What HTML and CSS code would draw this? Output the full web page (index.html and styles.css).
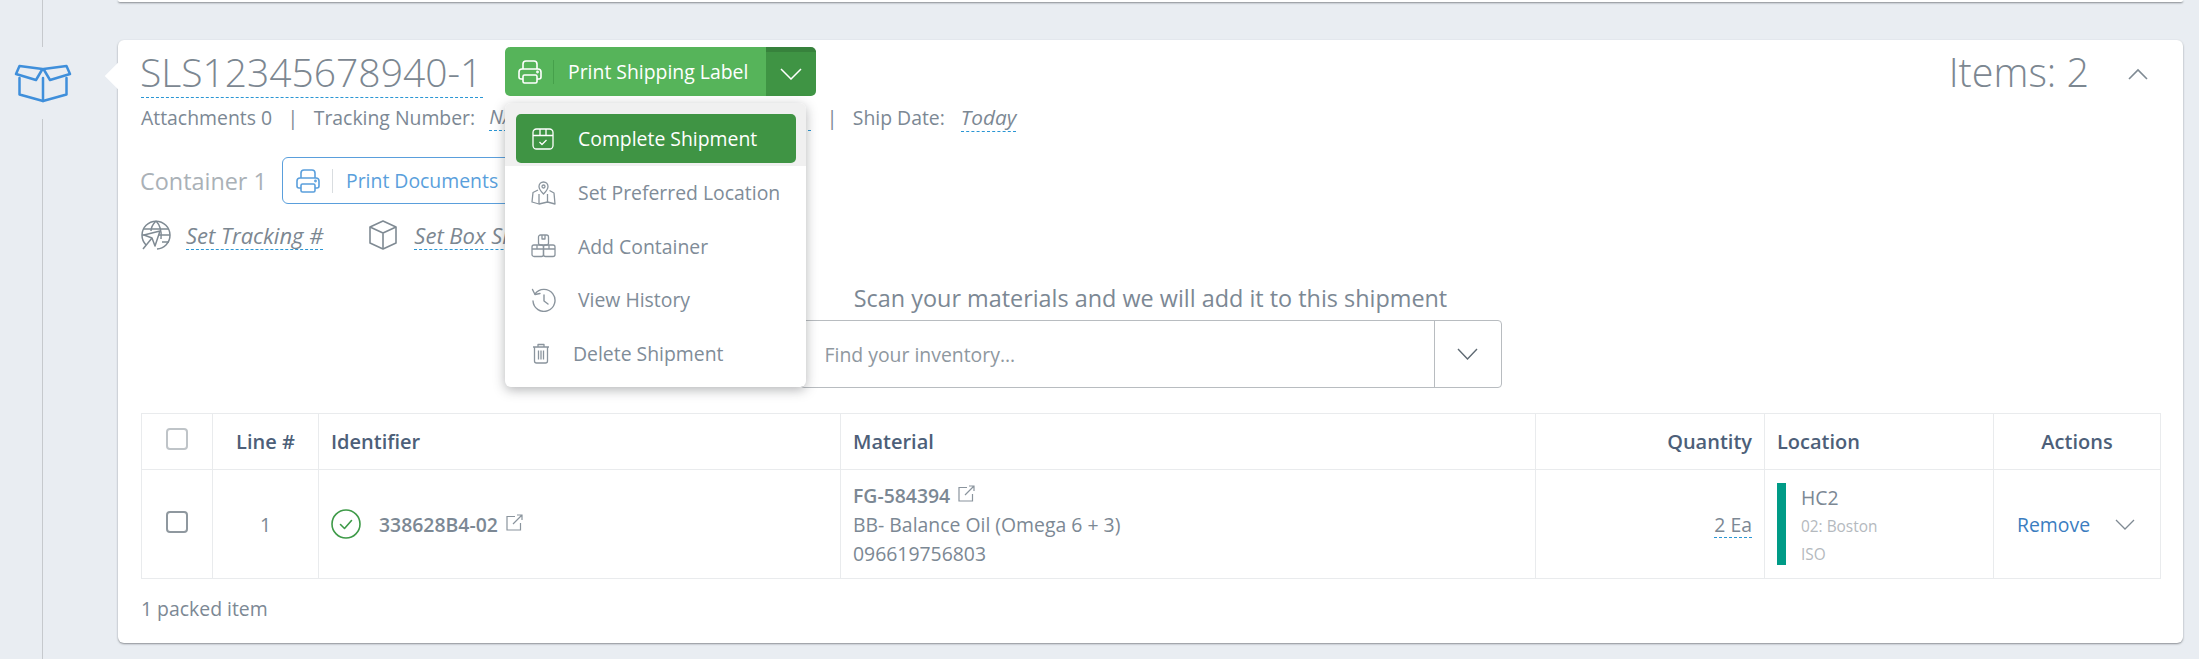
FILE: index.html
```html
<!DOCTYPE html>
<html lang="en">
<head>
<meta charset="utf-8">
<title>Shipment</title>
<link rel="stylesheet" href="styles.css">
</head>
<body>
<div class="page">
  <aside class="rail">
    <div class="rail-line rail-line-top"></div>
    <div class="rail-icon">
      <svg width="58" height="40" viewBox="0 0 58 40" fill="none" stroke="#3f8fdb" stroke-width="2.500" stroke-linejoin="round" stroke-linecap="round"><path d="M5.500 15v16.500L29 38l23.500-6.500V15"/><path d="M29 38V15"/><path d="M2 11l3.500-8L28.500 6 22 17z"/><path d="M56 11l-3.500-8L29.500 6 36 17z"/></svg>
    </div>
    <div class="rail-line rail-line-rest"></div>
  </aside>
  <main class="main">
    <div class="prev-card"></div>
    <section class="card">
      <span class="card-arrow"></span>
      <div class="title-row">
        <h1 class="title">SLS12345678940-1</h1>
        <div class="split">
          <button class="split-main">
            <svg class="btn-icon" width="26" height="26" viewBox="0 0 26 26" fill="none" stroke="#fff" stroke-width="1.600" stroke-linejoin="round"><path d="M6 10V5a3 3 0 0 1 3-3h8a3 3 0 0 1 3 3v5"/><path d="M6 20H4a2 2 0 0 1-2-2v-5a3 3 0 0 1 3-3h16a3 3 0 0 1 3 3v5a2 2 0 0 1-2 2h-2"/><rect x="6" y="16" width="14" height="8" rx="1.500"/><circle cx="20.500" cy="13" r=".6"/></svg>
            <span class="btn-sep"></span>
            <span>Print Shipping Label</span>
          </button>
          <button class="split-caret">
            <svg width="22" height="12" viewBox="0 0 22 12" fill="none" stroke="#fff" stroke-width="1.500"><path d="M1 1l10 10L21 1"/></svg>
          </button>
          <div class="menu">
            <div class="menu-active">
              <div class="menu-btn">
                <svg class="menu-icon" width="22" height="22" viewBox="0 0 22 22" fill="none" stroke="#fff" stroke-width="1.300" stroke-linejoin="round"><rect x="1" y="1" width="20" height="20" rx="3.500"/><path d="M1 7.500h20M8 1v6.500M14 1v6.500"/><path d="M7.500 14l2.500 2.500 4.500-4.500"/></svg>
                <span>Complete Shipment</span>
              </div>
            </div>
            <div class="menu-item">
              <svg class="menu-icon" width="25" height="24" viewBox="0 0 25 24" fill="none" stroke="#8a949d" stroke-width="1.300" stroke-linejoin="round"><path d="M12.500 13S8 8.500 8 5.500a4.500 4.500 0 0 1 9 0C17 8.500 12.500 13 12.500 13z"/><circle cx="12.500" cy="5.500" r="1.500"/><path d="M7 9l-5 2.500L1 21l7 2 8.500-2 7.500 2-1-11-4.500-2.500"/><path d="M8 13v10M16.500 13v8"/></svg>
              <span>Set Preferred Location</span>
            </div>
            <div class="menu-item">
              <svg class="menu-icon" width="25" height="24" viewBox="0 0 25 24" fill="none" stroke="#8a949d" stroke-width="1.300" stroke-linejoin="round"><rect x="7.500" y="1" width="10" height="10" rx="2"/><path d="M11 1v4h3V1"/><rect x="1" y="11" width="11.500" height="11.500" rx="2"/><rect x="12.500" y="11" width="11.500" height="11.500" rx="2"/><path d="M1 15h11.500M12.500 15H24M6 11v4M18 11v4"/></svg>
              <span>Add Container</span>
            </div>
            <div class="menu-item">
              <svg class="menu-icon" width="25" height="24" viewBox="0 0 25 24" fill="none" stroke="#8a949d" stroke-width="1.400" stroke-linecap="round" stroke-linejoin="round"><path d="M4 6a11 11 0 1 1-2 7"/><path d="M1.500 1.500L4 6.500l5-1"/><path d="M13 7v6l4 3"/></svg>
              <span>View History</span>
            </div>
            <div class="menu-item menu-item-delete">
              <svg class="menu-icon" width="18" height="21" viewBox="0 0 18 21" fill="none" stroke="#8a949d" stroke-width="1.300" stroke-linejoin="round"><path d="M1 4h16M6 4V1.500h6V4"/><path d="M2.500 4v14a2 2 0 0 0 2 2h9a2 2 0 0 0 2-2V4"/><path d="M6.500 7.500v9M9 7.500v9M11.500 7.500v9"/></svg>
              <span>Delete Shipment</span>
            </div>
          </div>
        </div>
        <div class="items">Items: 2</div>
        <svg class="collapse" width="20" height="12" viewBox="0 0 20 12" fill="none" stroke="#7f8a93" stroke-width="1.600"><path d="M1 11l9-9 9 9"/></svg>
      </div>

      <div class="meta">
        <span>Attachments 0</span>
        <span class="pipe">|</span>
        <span>Tracking Number:</span>
        <span class="editable tracking-value">N/A</span>
        <span class="pipe">|</span>
        <span>Ship Date:</span>
        <span class="editable ship-date">Today</span>
      </div>

      <div class="container-row">
        <span class="container-label">Container 1</span>
        <button class="outline-btn">
          <svg width="26" height="26" viewBox="0 0 26 26" fill="none" stroke="#5a9fdc" stroke-width="1.600" stroke-linejoin="round"><path d="M6 10V5a3 3 0 0 1 3-3h8a3 3 0 0 1 3 3v5"/><path d="M6 20H4a2 2 0 0 1-2-2v-5a3 3 0 0 1 3-3h16a3 3 0 0 1 3 3v5a2 2 0 0 1-2 2h-2"/><rect x="6" y="16" width="14" height="8" rx="1.500"/><circle cx="20.500" cy="13" r=".6"/></svg>
          <span class="outline-sep"></span>
          <span>Print Documents</span>
        </button>
      </div>

      <div class="set-row">
        <svg width="30" height="30" viewBox="0 0 30 30" fill="none" stroke="#7f8a93" stroke-width="1.500" stroke-linejoin="round"><path d="M5 25A14 14 0 1 1 25 25A14 14 0 0 1 16 29"/><path d="M2 9h26M1 15h28M15 1c-4 4-5 8-5 10M15 1c4 4 6 9 5 18M21 22h7"/><path d="M3 15l16-4-5 15-3-8z" fill="#fff"/><path d="M2 29l9-11"/></svg>
        <span class="editable set-tracking">Set Tracking #</span>
        <svg class="box-icon" width="30" height="30" viewBox="0 0 30 30" fill="none" stroke="#7f8a93" stroke-width="1.600" stroke-linejoin="round"><path d="M15 1l13 6v16l-13 6-13-6V7z"/><path d="M2 7l13 6 13-6M15 13v16"/></svg>
        <span class="editable set-box">Set Box Size</span>
      </div>

      <div class="scan">
        <div class="scan-title">Scan your materials and we will add it to this shipment</div>
        <div class="scan-field">
          <div class="scan-input">Find your inventory...</div>
          <div class="scan-caret">
            <svg width="21" height="12" viewBox="0 0 21 12" fill="none" stroke="#5f6a73" stroke-width="1.400"><path d="M1 1l9.500 10L20 1"/></svg>
          </div>
        </div>
      </div>

      <table class="grid">
        <colgroup>
          <col class="c-check"><col class="c-line"><col class="c-id"><col class="c-mat"><col class="c-qty"><col class="c-loc"><col class="c-act">
        </colgroup>
        <thead>
          <tr>
            <th class="center"><span class="checkbox checkbox-head"></span></th>
            <th class="center">Line #</th>
            <th>Identifier</th>
            <th>Material</th>
            <th class="right">Quantity</th>
            <th>Location</th>
            <th class="center">Actions</th>
          </tr>
        </thead>
        <tbody>
          <tr>
            <td class="center"><span class="checkbox"></span></td>
            <td class="center line-num">1</td>
            <td>
              <div class="id-cell">
                <svg width="30" height="30" viewBox="0 0 30 30" fill="none" stroke="#3e9a48" stroke-width="1.600"><circle cx="15" cy="15" r="14"/><path d="M9.500 15.500l4 4 7-8" stroke-linecap="round" stroke-linejoin="round"/></svg>
                <strong class="id-text">338628B4-02</strong>
                <svg class="ext" width="17" height="17" viewBox="0 0 17 17" fill="none" stroke="#8a949d" stroke-width="1.200"><path d="M9 2.500H1v13.500h13.500V9"/><path d="M7 10l9-9M11 1h5v5"/></svg>
              </div>
            </td>
            <td>
              <div class="mat-code"><strong>FG-584394</strong><svg class="ext" width="17" height="17" viewBox="0 0 17 17" fill="none" stroke="#8a949d" stroke-width="1.200"><path d="M9 2.500H1v13.500h13.500V9"/><path d="M7 10l9-9M11 1h5v5"/></svg></div>
              <div>BB- Balance Oil (Omega 6 + 3)</div>
              <div>096619756803</div>
            </td>
            <td class="right"><span class="editable qty">2 Ea</span></td>
            <td class="loc-cell">
              <div class="loc">
                <span class="loc-bar"></span>
                <div class="loc-text">
                  <div class="loc-name">HC2</div>
                  <div class="loc-sub">02: Boston</div>
                  <div class="loc-sub">ISO</div>
                </div>
              </div>
            </td>
            <td>
              <div class="actions">
                <span class="remove">Remove</span>
                <svg width="20" height="11" viewBox="0 0 20 11" fill="none" stroke="#7f8a93" stroke-width="1.300"><path d="M1 1l9 9 9-9"/></svg>
              </div>
            </td>
          </tr>
        </tbody>
      </table>
      <div class="packed">1 packed item</div>
    </section>
  </main>
</div>
</body>
</html>
```
FILE: styles.css
```css
* { box-sizing: border-box; }
html, body { margin: 0; padding: 0; height: 659px; overflow: hidden; }
body { background: #e9edf2; font-family: "Open Sans", sans-serif; color: #7c8894; font-size: 19.400px; }
button { font-family: inherit; border: 0; padding: 0; cursor: pointer; }
svg { display: block; flex: none; }

.page { display: flex; height: 659px; width: 2199px; }

.rail { width: 85px; margin-right: 33px; display: flex; flex-direction: column; align-items: center; }
.rail-line { width: 1px; background: #c6c9cd; }
.rail-line-top { height: 47px; }
.rail-icon { height: 72px; display: flex; align-items: center; }
.rail-line-rest { flex: 1; }

.main { width: 2065px; }
.prev-card { height: 2px; background: #fff; border-radius: 0 0 6px 6px; box-shadow: 0 1px 2px rgba(60, 64, 70, .6); }

.card { position: relative; margin-top: 38px; height: 603px; background: #fff; border-radius: 6px; padding: 7px 23px 0; box-shadow: 0 1px 2px rgba(60, 64, 70, .55); }
.card-arrow { position: absolute; left: -13px; top: 23px; width: 26px; height: 26px; background: #fff; transform: rotate(45deg) scale(.72); }

.title-row { position: relative; display: flex; align-items: flex-start; height: 50px; }
.title { margin: 0; width: 342px; height: 51px; font-size: 39px; line-height: 50px; font-weight: 300; color: #7c8791; border-bottom: 1px dashed #2a96d4; white-space: nowrap; text-indent: -1px; }

.split { position: relative; display: flex; margin-left: 22px; width: 311px; height: 49px; z-index: 3; }
.split-main { width: 261px; height: 49px; background: #56b45a; color: #fff; font-size: 19.400px; display: flex; align-items: center; border-radius: 5px 0 0 5px; padding-left: 12px; }
.btn-sep { width: 1px; height: 24px; background: #46a04b; margin: 0 14px 0 10px; }
.split-caret { width: 50px; height: 49px; background: #3f9444; border-top: 5px solid #37823c; border-radius: 0 5px 5px 0; display: flex; align-items: center; justify-content: center; }

.menu { position: absolute; left: 0; top: 56px; width: 301px; height: 284px; background: #fff; border-radius: 6px; box-shadow: 0 3px 12px rgba(40, 44, 50, .35); }
.menu-active { height: 63px; background: #f0f0f0; border-radius: 6px 6px 0 0; padding: 11px 10px 3px 11px; }
.menu-btn { height: 49px; background: #3f9444; color: #fff; border-radius: 5px; display: flex; align-items: center; padding-left: 16px; font-size: 19.400px; }
.menu-btn .menu-icon { margin-right: 24px; }
.menu-item { height: 53.500px; display: flex; align-items: center; padding-left: 26px; font-size: 19.400px; color: #808c98; }
.menu-item .menu-icon { margin-right: 22px; }
.menu-item-delete { padding-left: 27px; }
.menu-item-delete .menu-icon { margin-right: 23px; }

.items { margin-left: auto; margin-right: 39px; font-size: 39.500px; line-height: 50px; font-weight: 300; color: #7c8791; }
.collapse { margin-right: 12px; margin-top: 21px; }

.meta { display: flex; align-items: center; height: 34px; margin-top: 3px; white-space: nowrap; }
.pipe { margin: 0 15.500px; }
.editable { border-bottom: 1px dashed #2a96d4; font-style: italic; }
.tracking-value { margin-left: 14px; width: 322px; }
.ship-date { margin-left: 16px; font-size: 20.800px; }

.container-row { display: flex; align-items: center; margin-top: 23px; height: 47px; }
.container-label { font-size: 23.400px; color: #aab1b7; width: 141px; text-indent: -1px; }
.outline-btn { width: 310px; height: 47px; background: #fff; border: 1px solid #5a9fdc; border-radius: 6px; color: #5a9fdc; font-size: 19.400px; display: flex; align-items: center; padding-left: 12px; }
.outline-sep { width: 1px; height: 24px; background: #d9dde0; margin: 0 13px 0 11px; }

.set-row { display: flex; align-items: center; height: 30px; margin-top: 16px; font-size: 22px; color: #7c8791; }
.set-tracking { margin-left: 15px; line-height: 28px; }
.box-icon { margin-left: 45px; }
.set-box { margin-left: 16px; line-height: 28px; }

.scan { margin-top: 35px; display: flex; flex-direction: column; align-items: center; }
.scan-title { font-size: 23.400px; line-height: 27px; color: #7c8894; }
.scan-field { display: flex; width: 702px; height: 68px; margin-top: 8px; border: 1px solid #b8bcc0; border-radius: 4px; }
.scan-input { flex: 1; display: flex; align-items: center; padding-left: 24px; color: #8f989f; font-size: 19.400px; }
.scan-caret { width: 67px; border-left: 1px solid #b8bcc0; display: flex; align-items: center; justify-content: center; }

.grid { margin-top: 25px; width: 2019px; table-layout: fixed; border-collapse: collapse; border: 1px solid #e9ebed; }
.c-check { width: 71px; }
.c-line { width: 106px; }
.c-id { width: 522px; }
.c-mat { width: 695px; }
.c-qty { width: 229px; }
.c-loc { width: 229px; }
.c-act { width: 167px; }
.grid th, .grid td { border: 1px solid #e9ebed; padding: 0 12px; text-align: left; }
.grid th { height: 56px; font-size: 20px; font-weight: 600; color: #4d5f79; }
.grid td { height: 109px; font-size: 19.400px; line-height: 29px; color: #7c8894; }
.grid .center { text-align: center; }
.grid .right { text-align: right; padding-right: 12px; }

.checkbox { display: inline-block; width: 22px; height: 22px; border: 2px solid #8f989f; border-radius: 4px; vertical-align: middle; margin-top: -9px; }
.checkbox-head { border-color: #bfc4c8; }
.line-num { color: #6d8ea8; }
.id-cell { display: flex; align-items: center; }
.id-text { margin-left: 18px; font-weight: 600; }
.id-cell .ext { margin-left: 8px; margin-top: -3px; }
.mat-code { display: flex; align-items: center; }
.mat-code strong { font-weight: 600; }
.mat-code .ext { margin-left: 8px; margin-top: -4px; }
.qty { font-style: normal; display: inline-block; line-height: 24px; }

.grid .loc-cell { padding: 0 12px; }
.loc { display: flex; align-items: stretch; height: 82px; }
.loc-bar { width: 9px; background: #009b87; margin-right: 15px; }
.loc-name { font-size: 19.400px; line-height: 30px; }
.loc-sub { font-size: 15.400px; line-height: 28px; color: #b4b9be; }

.actions { display: flex; align-items: center; justify-content: space-between; padding: 0 0 0 11px; margin-right: 13px; }
.remove { color: #3b7dbf; }

.packed { margin-top: 16px; line-height: 28px; }
```
